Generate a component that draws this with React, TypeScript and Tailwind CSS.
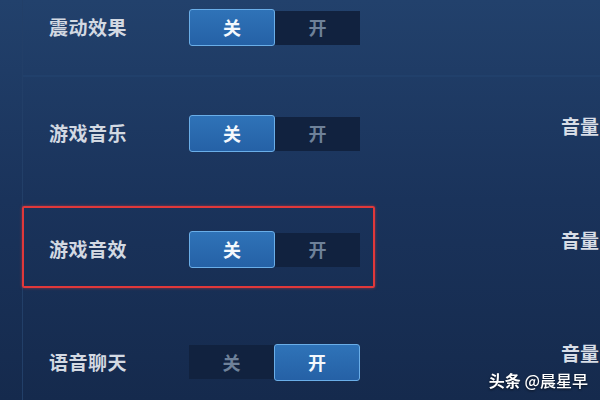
import React from "react";

const font = { fontFamily: '"Noto Sans CJK SC", "Noto Sans", sans-serif' };

function Toggle({ on }: { on: boolean }) {
  const active =
    "w-[86px] h-[37px] flex items-center justify-center rounded-[3px] border-[1.5px] border-[#6aaee8] bg-gradient-to-b from-[#2f73b8] to-[#2561a6] text-[#f4f8fc] text-[18px] font-bold";
  const inactive =
    "w-[85px] h-[34px] flex items-center justify-center bg-[#11223f] text-[#6e8199] text-[18px] font-bold";
  return (
    <div className="flex items-center">
      <div className={on ? inactive : active}>关</div>
      <div className={on ? active : inactive}>开</div>
    </div>
  );
}

function Label({ text }: { text: string }) {
  return (
    <div className="w-[140px] text-[19px] font-bold text-[#d3d9e2] tracking-[0.5px]">{text}</div>
  );
}

export default function App() {
  return (
    <div
      style={font}
      className="relative w-[600px] h-[400px] overflow-hidden bg-gradient-to-b from-[#22416c] via-[#1a335b] to-[#152a4d]"
    >
      <div className="flex flex-col h-full ml-[22px] border-l border-[#223f68]">
        {/* Row 1 */}
        <div className="h-[77px] pt-[9px] pl-[26px] flex items-start border-b-[2px] border-[#21406b]">
          <div className="h-[37px] flex items-center">
            <Label text="震动效果" />
            <Toggle on={false} />
          </div>
        </div>
        {/* Row 2 */}
        <div className="h-[129px] pt-[38px] flex items-start">
          <div className="w-[352px] pl-[26px] h-[37px] flex items-center">
            <Label text="游戏音乐" />
            <Toggle on={false} />
          </div>
          <div className="ml-[186px] -mt-[3px] text-[19px] font-bold text-[#d8dde6] whitespace-nowrap">音量</div>
        </div>
        {/* Row 3 (highlighted) */}
        <div className="flex items-start -ml-px">
          <div className="w-[353px] h-[82px] border-2 border-[#e0383a] rounded-[2px] pl-[25px] pt-[23px] shadow-[0_0_3px_rgba(230,60,60,0.6)]">
            <div className="h-[37px] flex items-center">
              <Label text="游戏音效" />
              <Toggle on={false} />
            </div>
          </div>
          <div className="ml-[186px] mt-[20px] text-[19px] font-bold text-[#d8dde6] whitespace-nowrap">音量</div>
        </div>
        {/* Row 4 */}
        <div className="pt-[55px] flex items-start">
          <div className="w-[352px] pl-[26px] h-[38px] flex items-center">
            <Label text="语音聊天" />
            <Toggle on={true} />
          </div>
          <div className="ml-[186px] -mt-[4px] text-[19px] font-bold text-[#d8dde6] whitespace-nowrap">音量</div>
        </div>
      </div>
      <div className="absolute right-[12px] bottom-[8px] text-[16px] text-white font-medium drop-shadow-[0_1px_1px_rgba(0,0,0,0.6)]">
        <span className="font-bold">头条</span> @晨星早
      </div>
    </div>
  );
}
